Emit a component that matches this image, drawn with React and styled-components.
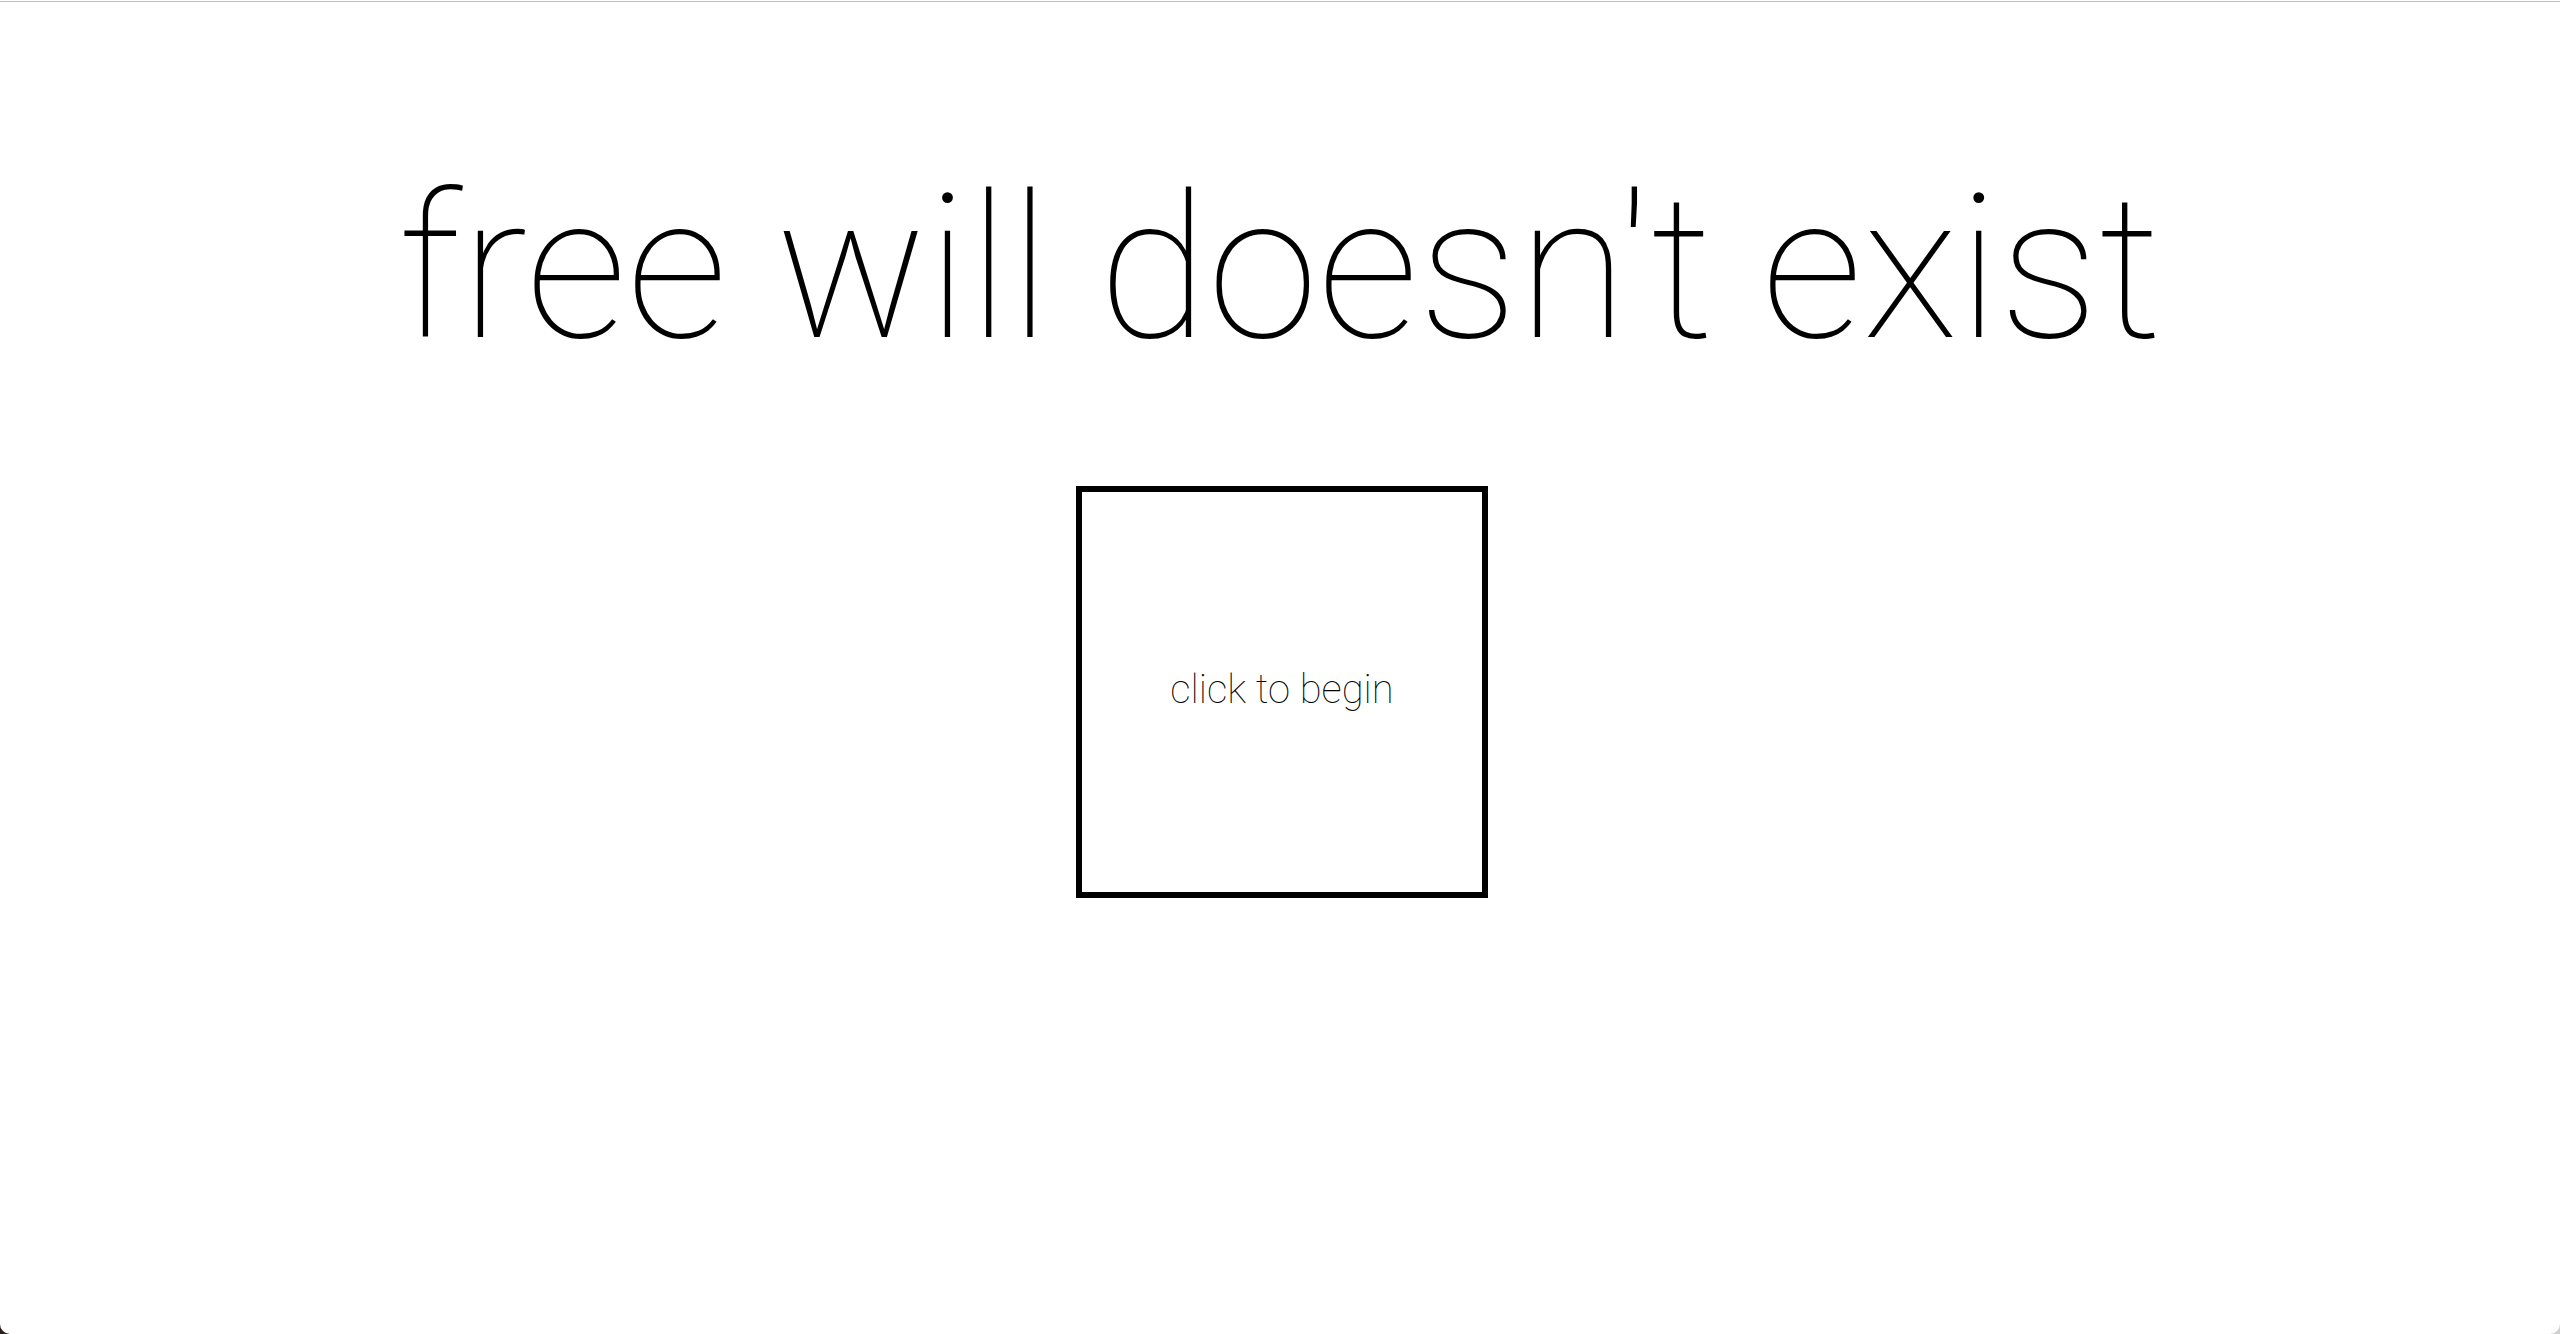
import React, { useState } from "react";
import styled, { createGlobalStyle } from "styled-components";

const GlobalStyle = createGlobalStyle`
  html, body {
    margin: 0;
    padding: 0;
  }
  body {
    font-family: Roboto, "Liberation Sans", sans-serif;
    background: linear-gradient(to right, #2a1f1a, #cfcfcf);
  }
`;

const Window = styled.div`
  height: 100vh;
  box-sizing: border-box;
  background: #fff;
  border-top: 1px solid #fff;
  box-shadow: inset 0 1px 0 #bdbdbd;
  border-radius: 0 0 10px 10px;
  display: flex;
  flex-direction: column;
  align-items: center;
`;

const Title = styled.h1`
  margin: 150px 0 0;
  font-family: Roboto, "Liberation Sans", sans-serif;
  font-weight: 100;
  font-size: 200px;
  line-height: normal;
  color: #000;
  white-space: nowrap;
`;

const StartBox = styled.button`
  margin: 100px 0 0 4px;
  width: 412px;
  height: 412px;
  box-sizing: border-box;
  border: 6px solid #000;
  background: #fff;
  display: flex;
  align-items: center;
  justify-content: center;
  cursor: pointer;
  padding: 0 0 6px 0;
  font-family: Roboto, "Liberation Sans", sans-serif;
  font-weight: 100;
  font-size: 40px;
  color: #000;
`;

export default function App() {
  const [started, setStarted] = useState(false);

  return (
    <>
      <GlobalStyle />
      <Window>
        <Title>free will doesn't exist</Title>
        <StartBox onClick={() => setStarted(true)}>
          {started ? "..." : "click to begin"}
        </StartBox>
      </Window>
    </>
  );
}
